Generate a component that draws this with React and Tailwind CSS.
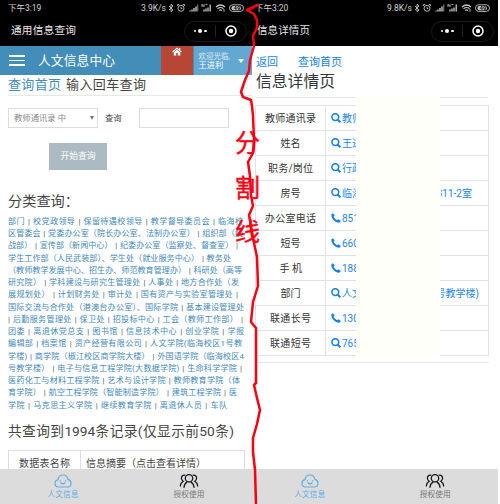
import React from "react";

const fit = "block whitespace-nowrap [text-align-last:justify]";

function Status({ time, speed, pad }) {
  return (
    <div className={`flex h-[16px] items-center justify-between text-[8.5px] text-[#d0d0d0] ${pad}`}>
      <span className="w-[33px] whitespace-nowrap">{time}</span>
      <div className="flex items-center">
        <span className="whitespace-nowrap">{speed}</span>
        <svg className="ml-[2px]" width="77" height="10" viewBox="0 0 77 10" fill="none" stroke="#c8c8c8" strokeWidth="0.9">
          <path d="M1 3l4 4-2 1.8V1.2L5 3 1 7" />
          <circle cx="13" cy="5.3" r="3" />
          <path d="M9.6 3V1.5h1.6M16.4 3V1.5h-1.6M13 3.8v1.7h1.3" />
          <path d="M22 8.5V7.5M24 8.5V6.5M26 8.5V5M28 8.5V3.5" strokeWidth="1.4" />
          <path d="M29.7 8.5V1.5" stroke="#777" strokeWidth="1.2" />
          <path d="M36 8.5V6.5M38 8.5V5.5M40 8.5V4.5M42.2 8.5V1.5" strokeWidth="1.3" />
          <path d="M34 4V1.2l2 2.5V1.2M37.5 1.5h2" strokeWidth="0.8" />
          <path d="M48 4q4.5-4 9 0M49.5 5.8q3-2.6 6 0M51.2 7.4q1.3-1 2.6 0" strokeWidth="1.2" />
          <path d="M56 6v2.8" />
          <rect x="61.5" y="1.8" width="14" height="6.6" rx="3.2" />
          <rect x="63.5" y="3" width="9.5" height="4.2" rx="2" fill="#c8c8c8" stroke="none" />
          <text x="65.5" y="7.3" fontSize="6" fill="#111" stroke="none" fontWeight="bold" fontFamily="Roboto">49</text>
        </svg>
      </div>
    </div>
  );
}

function Capsule() {
  return (
    <div className="flex h-[21px] w-[63px] items-center rounded-full border border-[#1c1c1c]">
      <div className="flex flex-1 items-center justify-center gap-[2px]">
        <i className="size-[2.5px] rounded-full bg-white" />
        <i className="size-[4px] rounded-full bg-white" />
        <i className="size-[2.5px] rounded-full bg-white" />
      </div>
      <div className="h-[12px] w-px bg-[#222]" />
      <div className="flex flex-1 justify-center">
        <svg width="12" height="12" viewBox="0 0 12 12">
          <circle cx="6" cy="6" r="5" fill="none" stroke="#fff" strokeWidth="1.5" />
          <circle cx="6" cy="6" r="2.2" fill="#fff" />
        </svg>
      </div>
    </div>
  );
}

function BottomNav({ cls }) {
  return (
    <div className={`flex h-[35px] bg-[#dcdcdc] text-[7.7px] leading-[10px] ${cls}`}>
      <div className="flex w-[126px] flex-col items-center pt-[4px] text-[#5fb0e5]">
        <svg width="18" height="16" viewBox="0 0 18 16" fill="none" stroke="currentColor" strokeWidth="1.2" strokeLinecap="round">
          <path d="M4.5 14C2 14 1 12 1 10.2 1 8.3 2.3 7 4 6.6 4.5 3.8 6.5 2 9 2c2.700 0 4.500 1.700 5 4.300 2 .5 3 2 3 3.900 0 2.200-1.300 3.800-3.500 3.800z" />
          <path d="M6.3 7.500v.3M11.700 7.500v.3M6.800 9.800q2.200 2 4.400 0" />
        </svg>
        <span className="mt-[1px] whitespace-nowrap">人文信息</span>
      </div>
      <div className="flex w-[126px] flex-col items-center pt-[4px] text-[#777]">
        <svg width="20" height="16" viewBox="0 0 20 16" fill="none" stroke="#151515" strokeWidth="1.25" strokeLinecap="round">
          <circle cx="10" cy="5.200" r="3.700" />
          <path d="M5 14.300c.2-2.700 1.300-4.300 3-5.200M15 14.300c-.2-2.700-1.300-4.300-3-5.200" />
          <path d="M5.800 2.200C3.500 2 2.300 3.500 2.400 5.200c.1 1.500.8 2.500 1.800 3C2.300 9.200 1.500 10.800 1.300 13M14.200 2.200c2.300-.2 3.500 1.300 3.400 3-.1 1.500-.8 2.500-1.800 3 1.900 1 2.700 2.600 2.900 4.800" />
        </svg>
        <span className="mt-[1px] whitespace-nowrap">授权使用</span>
      </div>
    </div>
  );
}

const lines = [
  ["w-[235px]", "部门 | 校党政领导 | 保留待遇校领导 | 教学督导委员会 | 临海校"],
  ["w-[235px]", "区管委会 | 党委办公室（院长办公室、法制办公室） | 组织部（统"],
  ["w-[228px]", "战部） | 宣传部（新闻中心） | 纪委办公室（监察处、督查室） |"],
  ["w-[223px]", "学生工作部（人民武装部）、学生处（就业服务中心） | 教务处"],
  ["w-[232px]", "（教师教学发展中心、招生办、师范教育管理办） | 科研处（高等"],
  ["w-[231px]", "研究院） | 学科建设与研究生管理处 | 人事处 | 地方合作处（发"],
  ["w-[230px]", "展规划处） | 计划财务处 | 审计处 | 国有资产与实验室管理处 |"],
  ["w-[236px]", "国际交流与合作处（港澳台办公室）、国际学院 | 基本建设管理处"],
  ["w-[235px]", "| 后勤服务管理处 | 保卫处 | 招投标中心 | 工会（教师工作部） |"],
  ["w-[236px]", "团委 | 离退休党总支 | 图书馆 | 信息技术中心 | 创业学院 | 学报"],
  ["w-[234px]", "编辑部 | 档案馆 | 资产经营有限公司 | 人文学院(临海校区1号教"],
  ["w-[236px]", "学楼) | 商学院（椒江校区商学院大楼） | 外国语学院（临海校区4"],
  ["w-[234px]", "号教学楼） | 电子与信息工程学院(大数据学院) | 生命科学学院 |"],
  ["w-[232px]", "医药化工与材料工程学院 | 艺术与设计学院 | 教师教育学院（体"],
  ["w-[229px]", "育学院） | 航空工程学院（智能制造学院） | 建筑工程学院 | 医"],
  ["w-[219px]", "学院 | 马克思主义学院 | 继续教育学院 | 离退休人员 | 车队"],
];

function Departments() {
  return (
    <div className="ml-[8px] mt-[4px] h-[196px] text-[8.1px] leading-[12.24px] text-[#4489bd] [word-spacing:0.7px]">
      {lines.map(([w, t]) => (
        <div key={t} className={`${fit} ${w}`}>
          {t.split("|").map((s, i) => (
            <React.Fragment key={i}>
              {i > 0 && <span className="text-[#555]">|</span>}
              {s}
            </React.Fragment>
          ))}
        </div>
      ))}
    </div>
  );
}

function QueryPage() {
  return (
    <section className="flex h-[504px] w-[252px] shrink-0 flex-col overflow-hidden bg-white">
      <header className="h-[46px] bg-black">
        <Status time="下午3:19" speed="3.9K/s" pad="pl-[8px] pr-[7px]" />
        <div className="flex h-[30px] items-center justify-between pl-[11px] pr-[5px] text-[#e8e8e8]">
          <span className={`${fit} w-[65px] text-[10.7px]`}>通用信息查询</span>
          <Capsule />
        </div>
      </header>
      <div className="flex h-[29px] bg-[#438eb9] text-white">
        <div className="flex w-[160.500px] items-center pl-[9px]">
          <div className="mr-[13px] flex w-[16px] flex-col gap-[3px]">
            <i className="h-[1.500px] bg-white" />
            <i className="h-[1.500px] bg-white" />
            <i className="h-[1.500px] bg-white" />
          </div>
          <span className={`${fit} w-[77px] text-[12.700px] leading-[16px]`}>人文信息中心</span>
        </div>
        <div className="flex w-[32px] justify-center bg-[#b74635] pt-[1px]">
          <svg width="10" height="9" viewBox="0 0 10 9" fill="#fff">
            <path d="M5 .5L.3 4.600l.7.8L5 2l4 3.400.7-.8L8.300 3.400V1H7v1.300z" />
            <path d="M5 2.700L1.700 5.500V8.500H4.200V6H5.800v2.500h2.500v-3z" />
          </svg>
        </div>
        <div className="ml-px flex flex-1 items-center bg-[#62a8d1] pl-[5px]">
          <div className="w-[36px] whitespace-nowrap text-[8.200px] leading-[9px]">
            <div className="text-[7.500px] text-[#dcecf6]">欢迎光临,</div>
            <div>王进利</div>
          </div>
          <i className="ml-[3px] border-x-[3px] border-t-[4px] border-x-transparent border-t-white" />
        </div>
      </div>
      <div className="ml-[8px] flex h-[21px] items-center gap-[5px] border-b border-[#e8e8e8] text-[13px] leading-[20px]">
        <span className={`${fit} w-[53px] text-[#438eb9]`}>查询首页</span>
        <span className={`${fit} w-[80px] text-[#444]`}>输入回车查询</span>
      </div>
      <div className="ml-[8px] mt-[12px] flex h-[20px] items-center text-[8.300px]">
        <div className="flex h-[20px] w-[90px] items-center justify-between border border-[#ddd] pl-[5px] pr-[3px] text-[#888]">
          <span className={`${fit} w-[52px]`}>教师通讯录 中</span>
          <i className="border-x-[2px] border-t-[4px] border-x-transparent border-t-[#777]" />
        </div>
        <span className="ml-[7px] w-[34px] text-[#444]">查询</span>
        <div className="h-[20px] w-[90px] border border-[#ddd]" />
      </div>
      <div className="ml-[49px] mt-[15px] flex h-[27px] w-[58px] items-center justify-center bg-[#abbac3] text-[8.800px] text-white">
        开始查询
      </div>
      <div className="ml-[8px] mt-[21px] h-[20px] text-[14.200px] leading-[20px] text-[#444]">分类查询：</div>
      <Departments />
      <div className={`${fit} ml-[8px] mt-[10px] h-[20px] w-[226px] text-[13.700px] leading-[20px] text-[#444]`}>
        共查询到1994条记录(仅显示前50条)
      </div>
      <div className="ml-[8px] mt-[9px] flex h-[19px] w-[237px] border-x border-t border-[#ddd] text-[10px] leading-[25px] text-[#444]">
        <div className="w-[72px] border-r border-[#ddd] pl-[10px]">
          <span className={`${fit} w-[51px]`}>数据表名称</span>
        </div>
        <span className={`${fit} ml-[5px] w-[119px]`}>信息摘要（点击查看详情）</span>
      </div>
      <BottomNav cls="relative mt-auto" />
    </section>
  );
}

const rows = [
  ["w-[51px]", "教师通讯录", "s", "教师"],
  ["w-[20px]", "姓名", "s", "王进利"],
  ["w-[45px]", "职务/岗位", "s", "行政"],
  ["w-[20px]", "房号", "s", "临海", "w-[31px]", "311-2室"],
  ["w-[51px]", "办公室电话", "p", "851"],
  ["w-[20px]", "短号", "p", "660"],
  ["w-[22px]", "手 机", "p", "188"],
  ["w-[20px]", "部门", "s", "人文", "w-[38px]", "1号教学楼)"],
  ["w-[41px]", "联通长号", "p", "130"],
  ["w-[41px]", "联通短号", "s", "765"],
];

function RowIcon({ kind }) {
  return kind === "s" ? (
    <svg className="shrink-0" width="10" height="10" viewBox="0 0 10 10" fill="none" stroke="#1580f5" strokeWidth="1.600">
      <circle cx="4.300" cy="4.100" r="3.400" />
      <path d="M6.600 6.500L9.400 9.300" strokeWidth="2" />
    </svg>
  ) : (
    <svg className="shrink-0" width="10" height="10" viewBox="0 0 10 10" fill="#1580f5">
      <path d="M1.900.2L.4 1.200C-.3 5.500 4.500 10.200 8.800 9.600L9.900 7.900 7.400 6.200 6.100 7.300C4.700 6.600 3.300 5.200 2.600 3.800L3.700 2.500z" />
    </svg>
  );
}

function DetailPage() {
  return (
    <section className="flex h-[504px] w-[246px] shrink-0 flex-col bg-white">
      <header className="h-[46px] bg-black">
        <Status time="下午3:20" speed="9.8K/s" pad="pl-[3px] pr-[7px]" />
        <div className="flex h-[30px] items-center justify-between pl-[5px] pr-[4px] text-[#e8e8e8]">
          <span className={`${fit} w-[53px] text-[10.500px]`}>信息详情页</span>
          <Capsule />
        </div>
      </header>
      <div className="ml-[4px] mt-[8px] flex h-[16px] gap-[20px] text-[11px] leading-[17px] text-[#1583f5]">
        <span className="w-[22px] whitespace-nowrap">返回</span>
        <span className="whitespace-nowrap">查询首页</span>
      </div>
      <div className="ml-[4px] mt-[1px] h-[27px] w-[232px] border-b border-[#e5e5e5] text-[15.800px] leading-[22px] text-[#33373b]">
        信息详情页
      </div>
      <div className="relative ml-[3px] mt-[7px] w-[234px] border-b border-[#e8e8e8] pb-[6px]">
        <div className="border-x border-t border-[#dfe3e7] text-[10px]">
          {rows.map(([w, label, kind, val, tw, tail]) => (
            <div key={label} className="flex h-[25px] border-b border-[#dfe3e7]">
              <div className="flex w-[70px] items-center justify-center border-r border-[#dfe3e7] text-[#333]">
                <span className={`${fit} ${w}`}>{label}</span>
              </div>
              <div className="flex w-[31px] items-center overflow-hidden whitespace-nowrap pl-[5px] text-[#1b86f5]">
                <RowIcon kind={kind} />
                <span className="ml-[1px]">{val}</span>
              </div>
              {tail && (
                <div className={`ml-[84px] flex items-center justify-end overflow-hidden whitespace-nowrap text-[#1b86f5] ${tw}`}>
                  {tail}
                </div>
              )}
            </div>
          ))}
        </div>
        <div className="absolute -top-[10px] left-[101px] h-[262px] w-[84px] bg-[#fffffa]" />
      </div>
      <BottomNav cls="mt-auto -ml-[5px] w-[251px]" />
    </section>
  );
}

export default function App() {
  return (
    <main className="relative flex h-[504px] w-[500px] overflow-hidden bg-white font-['Roboto','Noto_Sans_CJK_SC',sans-serif]">
      <QueryPage />
      <DetailPage />
      <div className="absolute left-[235px] top-[125px] flex flex-col gap-[7.500px] text-[25px] leading-[37px] text-[#fb0010] [-webkit-text-stroke:0.4px_#fb0010]">
        <span>分</span>
        <span>割</span>
        <span>线</span>
      </div>
      <svg className="absolute left-0 top-0" width="500" height="504" fill="none" stroke="#fb0010" strokeWidth="2.500" strokeLinejoin="round" strokeLinecap="round">
        <path d="M258 5L247 10L254 14L257 20L257 28L253 36L254 46L250 60L249 71L245 80L241 92L243 97L251 100L252 106L253 116L254 140L253 153L248 162L250 176L251 195L253 206L249 215L252 232L254 243L257 257L258 286L253 302L251 322L256 328L256 383L254 385L257 398L260 410L257 424L253 438L253 452L255 470L256 504" />
      </svg>
    </main>
  );
}
